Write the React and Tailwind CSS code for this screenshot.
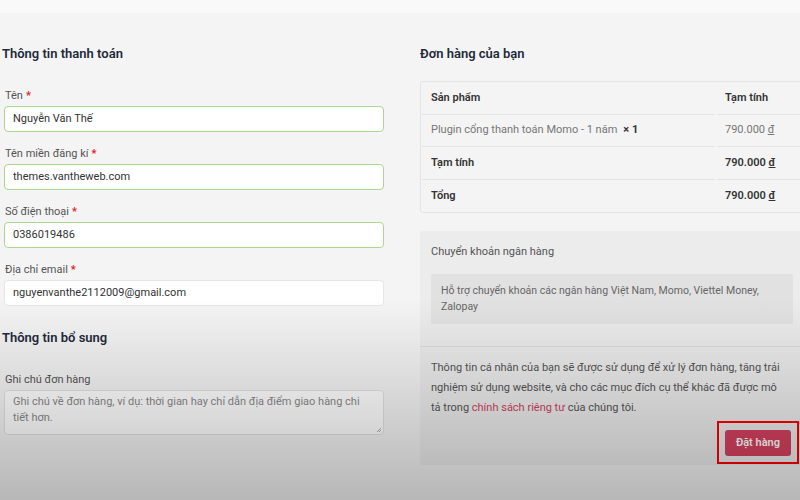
import React from "react";

const font = { fontFamily: "Roboto, 'Noto Sans', sans-serif" };

function Field({ label, required, value, valid }) {
    return (
        <div className="flex flex-col">
            <label className="text-[11px] text-[#555] leading-[16px] pl-[1px] mb-[2px]">
                {label}
                {required && <span className="text-[#e2202c] font-bold ml-[3px]">*</span>}
            </label>
            <div
                className={`h-[26px] rounded-[4px] bg-white border flex items-center px-[8px] text-[11px] text-[#333] ${
                    valid ? "border-[#a9d88e]" : "border-[#e6e6e6]"
                }`}
            >
                {value}
            </div>
        </div>
    );
}

export default function App() {
    return (
        <div className="relative w-[800px] h-[500px] overflow-hidden bg-[#f4f4f4]" style={font}>
            <div className="h-[13px] bg-[#f9f9f9]"></div>

            <div className="flex">
                {/* left column */}
                <div className="w-[384px] shrink-0 pl-[2px]">
                    <h3 className="text-[13px] font-semibold text-[#1f2a3a] mt-[33px] leading-[16px]">Thông tin thanh toán</h3>

                    <div className="flex flex-col gap-[14px] mt-[26px] pl-[2px]">
                        <Field label="Tên" required value="Nguyễn Văn Thế" valid />
                        <Field label="Tên miền đăng kí" required value="themes.vantheweb.com" valid />
                        <Field label="Số điện thoại" required value="0386019486" valid />
                        <Field label="Địa chỉ email" required value="nguyenvanthe2112009@gmail.com" />
                    </div>

                    <h3 className="text-[13px] font-semibold text-[#1f2a3a] mt-[24px] leading-[16px]">Thông tin bổ sung</h3>

                    <div className="mt-[26px] pl-[2px]">
                        <label className="block text-[11px] text-[#555] leading-[16px] pl-[1px] mb-[2px]">Ghi chú đơn hàng</label>
                        <div className="relative h-[45px] rounded-[4px] bg-white border border-[#e2e2e2] px-[8px] pt-[3px] text-[11px] leading-[16px] text-[#8a8a8a]">
                            Ghi chú về đơn hàng, ví dụ: thời gian hay chỉ dẫn địa điểm giao hàng chi tiết hơn.
                            <svg className="absolute right-[1px] bottom-[1px]" width="6" height="6" viewBox="0 0 6 6">
                                <path d="M5 1 L1 5 M5 3 L3 5" stroke="#999" strokeWidth="0.8" />
                            </svg>
                        </div>
                    </div>
                </div>

                {/* right column */}
                <div className="ml-[36px] shrink-0">
                    <h3 className="text-[13px] font-semibold text-[#1f2a3a] mt-[33px] leading-[16px]">Đơn hàng của bạn</h3>

                    <div className="mt-[19px] border border-[#e4e4e4] rounded-[3px] w-[390px] px-[1px]">
                        <div className="grid grid-cols-[292px_1fr] gap-x-[3px] text-[11px]">
                            <div className="h-[33px] flex items-center pl-[9px] font-semibold text-[#333] border-b border-[#e4e4e4]">Sản phẩm</div>
                            <div className="h-[33px] flex items-center pl-[8px] font-semibold text-[#333] border-b border-[#e4e4e4]">Tạm tính</div>

                            <div className="h-[32px] flex items-center pl-[9px] text-[#777] border-b border-[#e4e4e4]">
                                Plugin cổng thanh toán Momo - 1 năm <strong className="ml-[6px] text-[#333]">× 1</strong>
                            </div>
                            <div className="h-[32px] flex items-center pl-[8px] text-[#777] border-b border-[#e4e4e4]">
                                790.000&nbsp;<span className="underline">đ</span>
                            </div>

                            <div className="h-[33px] flex items-center pl-[9px] font-semibold text-[#333] border-b border-[#e4e4e4]">Tạm tính</div>
                            <div className="h-[33px] flex items-center pl-[8px] font-semibold text-[#333] border-b border-[#e4e4e4]">
                                790.000&nbsp;<span className="underline">đ</span>
                            </div>

                            <div className="h-[32px] flex items-center pl-[9px] font-semibold text-[#333]">Tổng</div>
                            <div className="h-[32px] flex items-center pl-[8px] font-semibold text-[#333]">
                                790.000&nbsp;<span className="underline">đ</span>
                            </div>
                        </div>
                    </div>

                    <div className="mt-[18px] w-[390px] rounded-[3px] bg-[#ececec]">
                        <div className="px-[11px] pt-[13px] pb-[22px] border-b border-[#dcdcdc]">
                            <div className="text-[11px] text-[#555] leading-[16px]">Chuyển khoản ngân hàng</div>
                            <div className="mt-[14px] mr-[6px] bg-[#e1e1e1] rounded-[2px] px-[10px] py-[9px] text-[10.5px] leading-[16px] text-[#666]">
                                Hỗ trợ chuyển khoản các ngân hàng Việt Nam, Momo, Viettel Money,<br />Zalopay
                            </div>
                        </div>
                        <div className="px-[11px] pt-[11px] pb-[1px]">
                            <p className="text-[11px] leading-[20px] text-[#555] w-[352px]">
                                Thông tin cá nhân của bạn sẽ được sử dụng để xử lý đơn hàng, tăng trải nghiệm sử dụng website, và cho các mục đích cụ thể khác đã được mô tả trong{" "}
                                <span className="text-[#d0435f]">chính sách riêng tư</span> của chúng tôi.
                            </p>
                            <div className="flex justify-end mt-[3px]">
                                <div className="border-2 border-[#ff0000] p-[6px]">
                                    <button className="h-[26px] px-[11px] rounded-[3px] bg-[#d5415f] text-white text-[11px] font-semibold">
                                        Đặt hàng
                                    </button>
                                </div>
                            </div>
                        </div>
                    </div>
                </div>
            </div>

            {/* video vignette */}
            <div className="pointer-events-none absolute inset-0 bg-gradient-to-b from-transparent from-60% to-black/25"></div>
        </div>
    );
}
